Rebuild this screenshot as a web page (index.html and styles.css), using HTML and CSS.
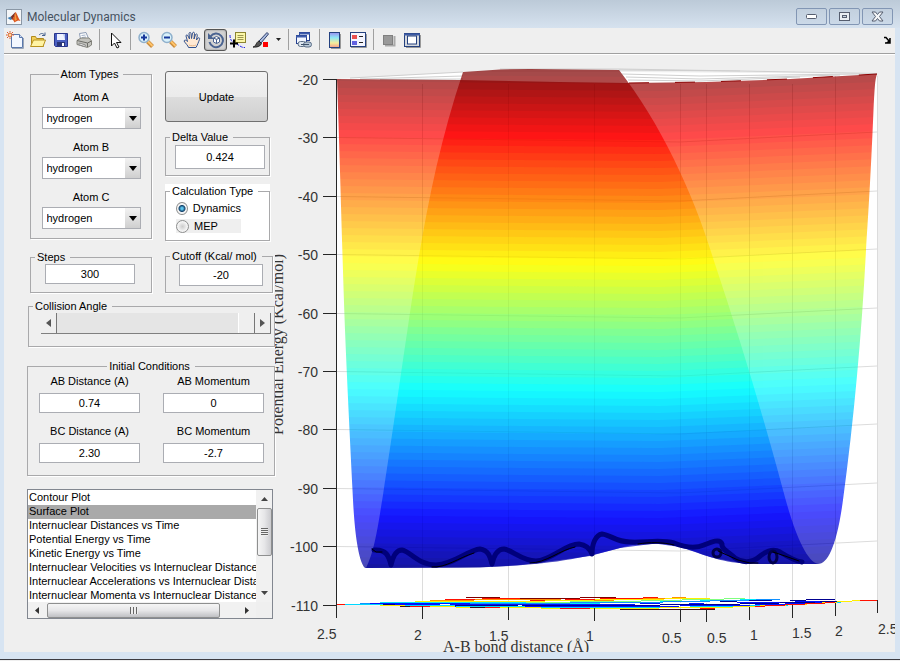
FILE: index.html
```html
<!DOCTYPE html>
<html lang="en">
<head>
<meta charset="utf-8">
<title>Molecular Dynamics</title>
<link rel="stylesheet" href="styles.css">
</head>
<body>
<div class="window">
  <header class="titlebar">
    <svg class="logo" width="16" height="16" viewBox="0 0 16 16" aria-hidden="true">
      <rect x=".5" y=".5" width="15" height="15" fill="#f4f6f8" stroke="#8a97a5"/>
      <path d="M1.5 9 5 7.500 7 9.500 4.500 11z" fill="#3f7fb5"/>
      <path d="M5 7.500 9.500 3 8 8 6 11z" fill="#7a2f22"/>
      <path d="M9.500 3C11 4 12 9 14.500 12 12 10.500 10.500 12 8.500 13.500 8 12 7 10.500 6 10.500 8 8.500 8.500 5 9.500 3z" fill="#d9541e"/>
      <path d="M9.500 3.500C10 6 10 9 11 10.500L9 12C8 10 9 7 9.500 3.500z" fill="#f39a3a"/>
    </svg>
    <h1>Molecular Dynamics</h1>
    <div class="winbtns">
      <button aria-label="Minimize"><svg width="13" height="7" viewBox="0 0 13 7"><rect x="1.500" y="1.500" width="10" height="4" rx="1" fill="#fff" stroke="#555d6e"/></svg></button>
      <button aria-label="Maximize"><svg width="12" height="10" viewBox="0 0 12 10"><rect x=".5" y=".5" width="10" height="8" fill="#e8edf2" stroke="#555d6e"/><rect x="3.500" y="3.500" width="4" height="2" fill="#c8d5e2" stroke="#555d6e"/></svg></button>
      <button aria-label="Close"><svg width="13" height="11" viewBox="0 0 13 11"><path d="M1 1h3.500l2 2.500 2-2.500H12L8.500 5.500 12 10H8.500l-2-2.500-2 2.500H1l3.500-4.500z" fill="#f4f6f8" stroke="#555d6e"/></svg></button>
    </div>
  </header>

  <nav class="toolbar" aria-label="Figure toolbar">
    <button aria-label="New"><svg width="18" height="18" viewBox="0 0 18 18"><path d="M5.500 3.500h8l3 3v10h-11z" fill="#f2f7ff" stroke="#5a78ac"/><path d="M13.500 3.500v3h3" fill="#cfdcf2" stroke="#5a78ac"/><path d="M17.500 7v10.500H6" stroke="#9aa6b8" fill="none"/><circle cx="4" cy="4" r="2" fill="#ffd9a0" stroke="#d95a2b"/><path d="M4 0v1M4 7v1M0 4h1M7 4h1M1 1l1 1M7 1 6 2M1 7l1-1" stroke="#d95a2b"/></svg></button>
    <button aria-label="Open"><svg width="18" height="18" viewBox="0 0 18 18"><path d="M2.500 15.500v-10h4l1 2h7v8z" fill="#f3cf58" stroke="#b08a1c"/><path d="M1.500 15.500l3-6.500h12l-2.500 6.500z" fill="#fff3a3" stroke="#b8921e"/><path d="M10 4c2-2 4-2 5.500 0M16 1.500v3h-3" fill="none" stroke="#47628f"/></svg></button>
    <button aria-label="Save"><svg width="18" height="18" viewBox="0 0 18 18"><path d="M2.500 2.500h13v13h-12l-1-1z" fill="#4a5fc1" stroke="#28358c"/><rect x="5" y="3" width="8" height="6" fill="#eef2ff"/><path d="M11 3h2v6z" fill="#bcc9ef"/><rect x="5" y="11" width="8" height="4" fill="#2a3577"/><rect x="10" y="12" width="2" height="3" fill="#fff"/></svg></button>
    <button aria-label="Print"><svg width="18" height="18" viewBox="0 0 18 18"><path d="M5.500 8 4.500 2.500 11 1.500l2.500 6z" fill="#fff" stroke="#8d9cb5"/><path d="M6.500 4.500l4-.5M7 6.500l4-.5" stroke="#9fb0c8"/><path d="M2 9.500 6 7h8l2.500 3v4l-4 2.500-10.500-3z" fill="#c3c3be" stroke="#85857d"/><path d="M2 9.500 12.500 12l4-2M12.500 12v4" fill="none" stroke="#6d6d68"/><path d="M3.500 13.500l6 2 1-1.500-6-2z" fill="#f2f2ee" stroke="#888"/></svg></button>
    <span class="sep"></span>
    <button aria-label="Edit plot"><svg width="18" height="18" viewBox="0 0 18 18"><path d="M5.500 2v13l3-3 2.500 5 2-1-2.500-4.500h4.500z" fill="#fff" stroke="#111"/></svg></button>
    <span class="sep"></span>
    <button aria-label="Zoom in"><svg width="18" height="18" viewBox="0 0 18 18"><path d="M10.500 10.500l5 5" stroke="#c98a39" stroke-width="4"/><path d="M10.500 10l5 5" stroke="#ffc36a" stroke-width="2"/><circle cx="7" cy="6.500" r="5" fill="#d9f1fb" stroke="#8fb0cc" stroke-width="1.500"/><path d="M7 3.500v6M4 6.500h6" stroke="#17389b" stroke-width="2"/></svg></button>
    <button aria-label="Zoom out"><svg width="18" height="18" viewBox="0 0 18 18"><path d="M10.500 10.500l5 5" stroke="#c98a39" stroke-width="4"/><path d="M10.500 10l5 5" stroke="#ffc36a" stroke-width="2"/><circle cx="7" cy="6.500" r="5" fill="#d9f1fb" stroke="#8fb0cc" stroke-width="1.500"/><path d="M4 6.500h6" stroke="#17389b" stroke-width="2"/></svg></button>
    <button aria-label="Pan"><svg width="18" height="18" viewBox="0 0 18 18"><path d="M5.500 16.500c-.5-2-3-4-4.500-6.500.5-1.500 2-1 3.500.5L3 5c0-1.500 1.500-1.500 2 0L6.500 8 6 2.500c.3-1.500 1.700-1.500 2 0L8.500 7.500 9.500 2c.5-1.200 2-1 2 .5L11 8l1.500-4.500c.7-1 2-.5 1.800.7L13.500 9l1.500-2c1-.7 2 0 1.500 1.500-.8 2-2 5.500-3.500 8z" fill="#ffe9d3" stroke="#31528f"/><path d="M6 14c2 1 5 1 7 0" stroke="#e8b98e" fill="none"/></svg></button>
    <button class="pressed" aria-label="Rotate 3D" aria-pressed="true"><svg width="18" height="18" viewBox="0 0 18 18"><path d="M3.500 5.500a6.800 6.800 0 1 1-1 5.500" fill="none" stroke="#4a6390" stroke-width="2"/><path d="M1 2v6h6z" fill="#4a6390"/><path d="M9.500 5.500l3 1.500v4l-3 1.500-3-1.500V7zM6.500 7l3 1.500 3-1.500M9.500 8.500v4" fill="#fff" stroke="#4a6390"/></svg></button>
    <button aria-label="Data cursor"><svg width="18" height="18" viewBox="0 0 18 18"><path d="M1 4c0 5 2 7 5 8s6 5 10 4.500" fill="none" stroke="#2323e8" stroke-dasharray="3 1"/><rect x="6.500" y="1.500" width="10" height="10" fill="#fbf7a8" stroke="#8c8432"/><path d="M8.500 4.500h6M8.500 6.500h6M8.500 8.500h6" stroke="#9b9550"/><path d="M5 8.500v8M1 12.500h8" stroke="#000" stroke-width="2"/></svg></button>
    <button aria-label="Brush"><svg width="18" height="18" viewBox="0 0 18 18"><path d="M7 10l8-8.500 1.500 1.500L9 12z" fill="#a9bbdf" stroke="#303f6b"/><path d="M1 16c3 0 3-5 6-6l2.500 2.500c-1 3-5 4-8.500 3.500z" fill="#555" stroke="#222"/><rect x="11" y="11" width="5" height="5" fill="#f00"/></svg></button>
    <button class="narrow" aria-label="Brush options"><svg width="5" height="3" viewBox="0 0 5 3"><path d="M0 0h5L2.500 3z" fill="#222"/></svg></button>
    <span class="sep"></span>
    <button aria-label="Link plot"><svg width="18" height="18" viewBox="0 0 18 18"><rect x="4.500" y="1.500" width="10" height="8" fill="#fff" stroke="#26418f"/><path d="M4 2.500h11" stroke="#3c5bab" stroke-width="2"/><rect x="1.500" y="4.500" width="10" height="8" fill="#f2f6ff" stroke="#26418f"/><path d="M1 5.500h11" stroke="#3c5bab" stroke-width="2"/><rect x="3" y="10.500" width="8" height="5" rx="2.500" fill="#dfe7f0" stroke="#5b6e87"/><rect x="8.500" y="11" width="8" height="5" rx="2.500" fill="#b9c8d8" stroke="#5b6e87"/><path d="M6 13.500h8" stroke="#3e5068"/></svg></button>
    <span class="sep"></span>
    <button aria-label="Insert colorbar"><svg width="18" height="18" viewBox="0 0 18 18"><defs><linearGradient id="cb" x2="0" y2="1"><stop stop-color="#9a8ff0"/><stop offset=".35" stop-color="#8fe8f5"/><stop offset=".7" stop-color="#f5ee9a"/><stop offset="1" stop-color="#f59a8a"/></linearGradient></defs><path d="M5 17.500h9.500V3" stroke="#999" fill="none"/><rect x="3.500" y="1.500" width="10" height="15" fill="url(#cb)" stroke="#24417f"/></svg></button>
    <button aria-label="Insert legend"><svg width="18" height="18" viewBox="0 0 18 18"><path d="M2 16.500h15.500V3" stroke="#999" fill="none"/><rect x="1.500" y="1.500" width="15" height="14" fill="#f4f5ff" stroke="#24417f"/><rect x="3" y="4" width="5" height="4" fill="#e85050"/><rect x="3" y="10" width="5" height="4" fill="#6262e0"/><path d="M10 5.500h4M10 11.500h4" stroke="#222"/></svg></button>
    <span class="sep"></span>
    <button aria-label="Hide plot tools"><svg width="18" height="18" viewBox="0 0 18 18"><path d="M5 14.500h9.500V5" stroke="#aaa" fill="none" stroke-width="2"/><rect x="3.500" y="4.500" width="9" height="9" fill="#999" stroke="#808080"/></svg></button>
    <button aria-label="Show plot tools"><svg width="18" height="18" viewBox="0 0 18 18"><path d="M3 16.500h14.500V4" stroke="#999" fill="none"/><rect x="1.500" y="2.500" width="15" height="13" fill="#d5d8dd" stroke="#24417f"/><path d="M1 3.500h16" stroke="#3d5ba5" stroke-width="2"/><rect x="4.500" y="5" width="9" height="8" fill="#fff" stroke="#24417f"/></svg></button>
    <svg class="dock" width="8" height="8" viewBox="0 0 8 8" aria-hidden="true"><path d="M1 1.500h2L6 5M7 2v5H2" fill="none" stroke="#000" stroke-width="1.500"/><path d="M7 3v4H3z"/></svg>
  </nav>

  <main class="content">
    <form class="panel">
      <div class="columns">
        <div class="col-left">
          <fieldset class="atoms">
            <legend class="center">Atom Types</legend>
            <label for="a">Atom A</label>
            <span class="combo"><select id="a"><option>hydrogen</option></select></span>
            <label for="b">Atom B</label>
            <span class="combo"><select id="b"><option>hydrogen</option></select></span>
            <label for="c">Atom C</label>
            <span class="combo"><select id="c"><option>hydrogen</option></select></span>
          </fieldset>
          <fieldset class="steps">
            <legend id="l-steps">Steps</legend>
            <input type="text" value="300" aria-labelledby="l-steps">
          </fieldset>
        </div>
        <div class="col-right">
          <button type="button" class="update">Update</button>
          <fieldset class="delta">
            <legend id="l-delta">Delta Value</legend>
            <input type="text" value="0.424" aria-labelledby="l-delta">
          </fieldset>
          <div class="calc">
            <fieldset>
              <legend>Calculation Type</legend>
              <label><input type="radio" name="calc" checked>Dynamics</label>
              <label class="shaded"><input type="radio" name="calc">MEP</label>
            </fieldset>
          </div>
          <fieldset class="cutoff">
            <legend id="l-cut">Cutoff (Kcal/ mol)</legend>
            <input type="text" value="-20" aria-labelledby="l-cut">
          </fieldset>
        </div>
      </div>

      <fieldset class="angle">
        <legend id="l-angle">Collision Angle</legend>
        <div class="slider">
          <button type="button" aria-label="Decrease angle"><svg width="5" height="8" viewBox="0 0 5 8"><path d="M5 0v8L0 4z" fill="#555"/></svg></button>
          <input type="range" min="0" max="180" value="180" aria-labelledby="l-angle">
          <button type="button" aria-label="Increase angle"><svg width="5" height="8" viewBox="0 0 5 8"><path d="M0 0v8l5-4z" fill="#555"/></svg></button>
        </div>
      </fieldset>

      <fieldset class="initial">
        <legend class="center">Initial Conditions</legend>
        <div class="pairs">
          <label>AB Distance (A)<input type="text" value="0.74"></label>
          <label>AB Momentum<input type="text" value="0"></label>
          <label>BC Distance (A)<input type="text" value="2.30"></label>
          <label>BC Momentum<input type="text" value="-2.7"></label>
        </div>
      </fieldset>

      <div class="listbox">
        <select size="8" aria-label="Plot type">
          <option>Contour Plot</option>
          <option selected>Surface Plot</option>
          <option>Internuclear Distances vs Time</option>
          <option>Potential Energy vs Time</option>
          <option>Kinetic Energy vs Time</option>
          <option>Internuclear Velocities vs Internuclear Distance</option>
          <option>Internuclear Accelerations vs Internuclear Distance</option>
          <option>Internuclear Momenta vs Internuclear Distance</option>
        </select>
        <div class="vbar">
          <svg width="7" height="4" viewBox="0 0 7 4"><path d="M0 4h7L3.500 0z" fill="#444"/></svg>
          <span class="vthumb"><i></i></span>
          <svg class="end" width="7" height="4" viewBox="0 0 7 4"><path d="M0 0h7L3.500 4z" fill="#444"/></svg>
        </div>
        <div class="hbar">
          <svg width="4" height="7" viewBox="0 0 4 7"><path d="M4 0v7L0 3.500z" fill="#333"/></svg>
          <span class="hthumb"><i></i></span>
          <svg class="end" width="4" height="7" viewBox="0 0 4 7"><path d="M0 0v7l4-3.500z" fill="#333"/></svg>
        </div>
        <div class="corner"></div>
      </div>
    </form>

    <svg class="chart" viewBox="275 55 620 597" role="img" aria-label="Potential energy surface">
      <defs>
        <clipPath id="outer"><path d="M337 79L460 80 560 82 629 83 706 82 790 79 877 74C875 79 874.500 90 873.500 110 871 170 869 205 866 250 862 330 854 420 843 500 837 545 828 564 818 564H760L740 563 710 557 680 547 655 543.500 620 548 590 556 560 560 520 565 480 567.500 365 568C357 560 354 520 353 500 350 440 347 380 345 330 342 250 340 160 337 79z"/></clipPath>
        <clipPath id="inner"><path d="M463 72L500 69.500 530 69 619 70C660 122 694 195 713 258 740 338 763 416 783 490 794 532 806 561 818 564H760C725 564 710 557 690 550 665 541 640 542 620 548 580 559 540 567 460 567.500L366 568C375 550 378 525 383 495 393 430 400 380 411 306 422 235 435 155 463 72z"/></clipPath>
      </defs>
      <path d="M337 79L463 72H619L877 74V600L680 609 337 605z" fill="#fff"/>
      <g class="mesh">
        <path d="M350 78L463 72M360 79L463 76M380 79.500L463 79M619 70L740 71 877 73.500M622 74L700 76 860 74M626 77L700 79 840 75M628 80L700 81 800 77M500 69H619L740 71"/>
      </g>
      <g id="grid" class="grid"></g>
      <g id="surface-back" opacity=".71" clip-path="url(#outer)"></g>
      <g id="surface-front" opacity=".71" clip-path="url(#inner)"></g>
      <g id="grid-over" class="grid faint" clip-path="url(#outer)"></g>
      <path d="M629 83L706 82 790 79 877 74" fill="none" stroke="#8b0000" stroke-dasharray="20 26"/>
      <g fill="none" stroke-linejoin="round" stroke-linecap="round">
        <path d="M374 550C386 549 389 556 391 565 393 556 397 550 402 550 410 551 418 565 436 565 455 564 468 550 480 549 488 550 490 556 492 564 494 555 497 549 504 549 512 550 522 561 536 561 552 560 565 544 579 544 587 545 590 549 592 554 592 543 596 535 602 534 611 535 616 542 630 542 645 543 660 539 674 543 684 547 695 549 704 545 711 542 720 538 722 544 721 549 729 552 735 558 742 563 752 563 759 557 766 551 773 548 780 552 788 557 795 561 802 562" stroke="#00007c" stroke-width="5"/>
        <circle cx="717" cy="553" r="4" stroke="#00004c" stroke-width="3"/>
        <ellipse cx="773" cy="557" rx="4" ry="6" stroke="#00004c" stroke-width="3"/>
        <path d="M372 549l4 3h6M432 567c14 1 26-9 42-14M530 563c16 0 30-13 45-16M718 551l20 9 12 3h8M773 552l12 4 14 5M638 544c12-2 24-2 36 1" stroke="#000" stroke-width="1"/>
      </g>
      <g id="contours" class="contours"></g>
      <g class="axis">
        <path id="ticks" fill="none"/>
      </g>
      <g id="labels" class="tick-labels"></g>
      <text class="axis-title" x="443" y="652">A-B bond distance (Å)</text>
      <text class="axis-title" transform="translate(283 435) rotate(-90)">Potential Energy (Kcal/mol)</text>
    </svg>
  </main>
</div>
<script src="chart.js"></script>
</body>
</html>
```
FILE: styles.css
```css
* { box-sizing: border-box; }

body {
  margin: 0;
  background: #efefef;
  color: #000;
  font: 11px/14px "Liberation Sans", Arial, sans-serif;
}

button, input, select { font: inherit; color: inherit; }

.window {
  padding: 0 5px 7px 4px;
  background: #d7e4f2;
  border-bottom: 1px solid #3c3c42;
}

.titlebar {
  display: flex;
  align-items: center;
  gap: 5px;
  height: 28px;
  margin: 0 -5px 0 -4px;
  padding: 5px 7px 0 6px;
  background: linear-gradient(#bccad8, #d6e2ef);
}

.titlebar h1 {
  flex: 1;
  margin: 0;
  font: 12px/16px Roboto, sans-serif;
  color: #46525f;
}

.winbtns { display: flex; gap: 2px; }

.winbtns button {
  display: flex;
  align-items: center;
  justify-content: center;
  width: 31px;
  height: 17px;
  padding: 0;
  border: 1px solid #8296b4;
  border-radius: 2px;
  background: linear-gradient(#c3d0de, #cbd9e8);
}

.toolbar {
  display: flex;
  align-items: center;
  height: 27px;
  padding-bottom: 3px;
  background: #efefef;
  border-bottom: 1px solid #fff;
  box-shadow: inset 0 -1px #a0a0a0;
}

.toolbar button {
  display: flex;
  flex: none;
  align-items: center;
  justify-content: center;
  width: 23px;
  height: 22px;
  padding: 0 1px 0 0;
  border: 0;
  background: none;
}

.toolbar button svg { flex: none; }

.toolbar .narrow { width: 12px; }

.toolbar .pressed {
  padding: 0;
  border: 1px solid #555;
  border-radius: 3px;
  background: #d2d2d2;
  box-shadow: inset 0 0 2px #777;
}

.sep {
  flex: none;
  width: 1px;
  height: 21px;
  margin: 0 4px 0 3px;
  background: #a0a0a0;
}

.dock { margin: 0 4px 0 auto; }

.content {
  display: grid;
  grid-template-columns: 271px minmax(0, 1fr);
  align-items: start;
  background: #efefef;
}

.chart { display: block; width: 100%; height: auto; }

.panel { padding: 12px 0 0 23px; }

fieldset {
  min-width: 0;
  margin: 0;
  padding: 0;
  border: 1px solid #a9a9ab;
  box-shadow: 1px 1px #fff;
}

legend { margin-left: 4px; padding: 0 5px 0 2px; white-space: nowrap; }
legend.center { margin: 0 auto; }

input[type="text"] {
  display: block;
  height: 20px;
  padding: 0;
  border: 1px solid #abadb3;
  background: #fff;
  text-align: center;
}

.columns { display: flex; gap: 13px; padding-left: 3px; }

.col-left { display: flex; flex-direction: column; gap: 11px; width: 122px; }

.col-right {
  display: flex;
  flex-direction: column;
  gap: 8px;
  width: 105px;
  padding-top: 4px;
}

.atoms { height: 172px; }

.atoms label { margin: 9px 0 3px; display: block; text-align: center; }

.combo {
  position: relative;
  display: block;
  width: 99px;
  height: 22px;
  margin: 0 auto;
}

.combo + label { margin-top: 11px; }

.combo select {
  appearance: none;
  width: 100%;
  height: 22px;
  padding: 0 18px 0 4px;
  border: 1px solid #abadb3;
  border-radius: 0;
  background: linear-gradient(#f2f2f2, #cfcfcf) right / 15px 100% no-repeat #fff;
}

.combo::after {
  content: "";
  position: absolute;
  top: 9px;
  right: 4px;
  border: 4px solid transparent;
  border-top: 5px solid #000;
  border-bottom: 0;
  pointer-events: none;
}

.steps { height: 43px; }
.steps input { width: 90px; margin-left: 14px; }

.update {
  height: 51px;
  width: 103px;
  padding: 0;
  border: 1px solid #707070;
  border-radius: 3px;
  background: linear-gradient(#f2f2f2, #ebebeb 50%, #dddddd 50%, #cfcfcf);
}

.delta { height: 46px; }
.delta input { width: 90px; height: 24px; margin: 1px 0 0 9px; }

.calc { height: 57px; background: #fff; }
.calc fieldset { height: 57px; }

.calc label {
  display: flex;
  align-items: center;
  gap: 5px;
  height: 14px;
  margin: 3px 28px 4px 10px;
}

.calc .shaded { background: #efefef; }

.calc input {
  appearance: none;
  width: 13px;
  height: 13px;
  margin: 0;
  border: 1px solid #8e8f8f;
  border-radius: 50%;
  background: radial-gradient(#ccc, #f4f4f4 60%);
}

.calc input:checked {
  background: radial-gradient(circle, #5cc5ee 0 1px, #14426b 3px, #f4f4f4 4px);
}

.cutoff { height: 44px; width: 108px; }
.cutoff input { width: 84px; height: 22px; margin: 1px 0 0 13px; }

.angle { height: 48px; margin: 6px 0 0 1px; }

.slider {
  display: flex;
  height: 21px;
  margin: 0 3px 0 12px;
  border-bottom: 1px solid #808080;
}

.slider button {
  flex: none;
  width: 16px;
  height: 20px;
  padding: 0;
  border: 0;
  border-right: 1px solid #777;
  background: #efefef;
}

.slider input {
  appearance: none;
  flex: 1;
  min-width: 0;
  height: 20px;
  margin: 0;
  background: #e5e5e5;
}

.slider input::-webkit-slider-thumb {
  appearance: none;
  width: 17px;
  height: 20px;
  border: 0;
  border-left: 1px solid #fff;
  border-right: 1px solid #777;
  background: #efefef;
}

.initial { height: 117px; margin-top: 12px; }

.pairs {
  display: grid;
  grid-template-columns: 101px 101px;
  gap: 11px 23px;
  padding: 1px 0 0 11px;
}

.pairs label { text-align: center; }
.pairs input { width: 100%; margin-top: 5px; }

.listbox {
  display: grid;
  grid-template-columns: minmax(0, 1fr) 16px;
  grid-template-rows: 112px 16px;
  width: 246px;
  margin-top: 13px;
  border: 1px solid #828790;
  background: #fff;
}

.listbox select {
  height: 112px;
  padding: 1px 0 0;
  border: 0;
  outline: 0;
  border-radius: 0;
  background: #fff;
  overflow: hidden;
  scrollbar-width: none;
}

.listbox option {
  min-height: 14px;
  padding: 0 1px;
  line-height: 14px;
  color: #000;
}

.listbox option:checked {
  background: linear-gradient(#a9a9a9, #a9a9a9);
  color: #000;
}

.vbar, .hbar { display: flex; align-items: center; background: #f1f1f1; }
.vbar { flex-direction: column; padding: 7px 0; gap: 7px; }
.hbar { padding: 0 7px; gap: 8px; }
.corner { background: #efefef; }
.end { margin-top: auto; }
.hbar .end { margin: 0 0 0 auto; }

.vthumb, .hthumb {
  display: flex;
  align-items: center;
  justify-content: center;
  border: 1px solid #8e8f8f;
  border-radius: 2px;
}

.vthumb { width: 15px; height: 48px; background: linear-gradient(90deg, #f5f5f5, #e6e6e8 50%, #cbcbcf); }
.hthumb { width: 173px; height: 15px; background: linear-gradient(#f5f5f5, #e6e6e8 50%, #bfc0c4); }

.vthumb i { width: 7px; height: 8px; background: repeating-linear-gradient(#666 0 1px, #eee 1px 2px); }
.hthumb i { width: 8px; height: 7px; background: repeating-linear-gradient(90deg, #666 0 1px, #eee 1px 3px); }

.mesh path { fill: none; stroke: #cfcfcf; }
.grid path { fill: none; stroke: #dcdcdc; }
.grid.faint path { stroke: #000; stroke-opacity: .03; }
.contours path { fill: none; shape-rendering: crispEdges; }
.axis path { stroke: #262626; }

.tick-labels text {
  font-size: 14px;
  fill: #333;
}

.tick-labels .y { text-anchor: end; }

.axis-title {
  font-family: "Liberation Serif", "Times New Roman", serif;
  font-size: 16px;
  fill: #333;
}
```
FILE: chart.js
```js
const NS = "http://www.w3.org/2000/svg";

function add(parent, name, attrs, text) {
  const node = document.createElementNS(NS, name);
  for (const key in attrs) node.setAttribute(key, attrs[key]);
  if (text !== undefined) node.textContent = text;
  document.getElementById(parent).appendChild(node);
}

function jet(t) {
  const channel = (c) =>
    Math.round(255 * Math.max(0, Math.min(1, 1.5 - Math.abs(4 * t - c))));
  return `rgb(${channel(3)},${channel(2)},${channel(1)})`;
}

// Colour bands bend with the perspective of the two horizontal axes.
for (let y = 60; y < 590; y += 7) {
  const t = Math.max(0, Math.min(1, 1 - (y - 67) / 509));
  const d = `M335 ${y}L520 ${y + 2} 660 ${y + 3} 880 ${y - 6}V${y + 3}L660 ${y + 12} 520 ${y + 11} 335 ${y + 9}z`;
  add("surface-back", "path", { d, fill: jet(t) });
  add("surface-front", "path", { d, fill: jet(t) });
}

// Horizontal gridlines, z ticks and labels
let ticks = "M336.500 79V617";
for (let i = 0; i < 10; i++) {
  const y = Math.round(79 + i * 58.4) + 0.5;
  ticks += `M323 ${y}H337`;
  add("labels", "text", { class: "y", x: 318, y: y + 5 }, String(-20 - 10 * i));
  if (i > 0 && i < 9) {
    const d = `M337 ${y}L680 ${y + 4.5} 877 ${y - 5.5}`;
    add("grid", "path", { d });
    add("grid-over", "path", { d });
  }
}

// Bond distance ticks: x, floor y, label, label x, label baseline
const bond = [
  [336.5, 605, "2.5", 317, 639], [422.5, 606, "2", 414, 640],
  [508.5, 607, "1.5", 489, 641], [594.5, 608, "1", 586, 641],
  [680.5, 609, "0.5", 662, 643], [706.5, 609, "0.5", 707, 643],
  [749.5, 607, "1", 750, 640], [792.5, 605, "1.5", 792, 638],
  [835.5, 603, "2", 835, 636], [877.5, 600, "2.5", 878, 634],
];
for (const [x, y, label, lx, ly] of bond) {
  ticks += `M${x} ${y}v13`;
  if (x > 337) {
    add("grid", "path", { d: `M${x} ${x > 800 ? 76 : 84}V${y}` });
    add("grid-over", "path", { d: `M${x} 84V${y}` });
  }
  add("labels", "text", { x: lx, y: ly }, label);
}
document.getElementById("ticks").setAttribute("d", ticks);

// Contour lines projected on the floor of the box
const contours = [
  ["#800000", "M466 597.500H500M500 598.500H580M580 597.500H616"],
  ["#ff1000", "M445 599.500L520 598.500M530 600.500L600 599.500 658 597.500M600 598.500H640"],
  ["#ff9000", "M430 600.500L520 599.500 600 600.500 686 597.500"],
  ["#ffee00", "M415 601.500L520 601.500 620 599.500 710 598.500"],
  ["#7fff7f", "M395 602.500L520 602.500 620 601.500 745 598.500"],
  ["#00e8ff", "M380 602.500L450 602.500 600 603.500 760 599.500M700 600.500L800 600.500"],
  ["#1090ff", "M360 603.500L500 603.500 640 602.500 780 599.500"],
  ["#0010ff", "M355 604L480 604.500 600 604.500 740 602.500 850 601.500M370 603H470"],
  ["#000090", "M350 604.500L440 605.500 600 605.500 720 604.500 840 601.500M720 601.500L835 599.500"],
  ["#0010ff", "M390 605.500L500 606.500 620 606.500 740 605.500 830 602.500"],
  ["#00d8ff", "M345 604.500L420 605.500 560 607.500 660 607.500 780 605.500 850 601.500"],
  ["#ffee00", "M380 605.500L480 607.500 600 608.500 720 607.500 800 604.500 860 600.500"],
  ["#ff1000", "M337 604.500H345M410 606.500H430M480 607.500H500M560 608.500H590M700 608.500H715M755 606.500L835 602.500M860 601L877 600"],
  ["#401010", "M400 606.500H410M470 607.500H485M620 609.500H715"],
  ["#ffffff", "M440 604.500H450M518 605.500H522M660 603.500L720 602.500 790 600.500M600 603.500L640 603.500"],
];
for (const [stroke, d] of contours) add("contours", "path", { d, stroke });
```
